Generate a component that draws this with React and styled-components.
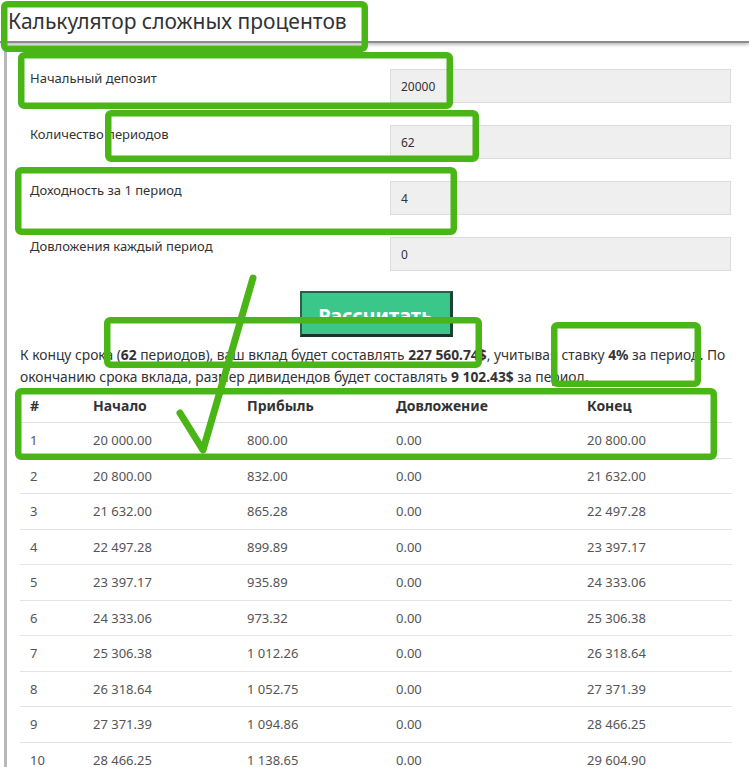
import React from "react"
import styled, { createGlobalStyle } from "styled-components"

const GlobalStyle = createGlobalStyle`
  body {
    margin: 0;
    background: #fff;
    font-family: "Noto Sans", "Open Sans", sans-serif;
    color: #333;
  }
`

const Page = styled.div`
  position: relative;
  width: 749px;
  height: 767px;
  overflow: hidden;
`

const Header = styled.header`
  height: 41px;
  padding: 0 8px;
  display: flex;
  align-items: center;
  border-bottom: 2px solid #8c8c8c;
  box-shadow: 0 2px 3px rgba(0, 0, 0, 0.25);
`

const Title = styled.h1`
  margin: 0;
  font-size: 21px;
  font-weight: 400;
  color: #333;
`

const Main = styled.main`
  margin-left: 4px;
  border-left: 3px solid #b8b8b8;
  padding: 26px 17px 0 13px;
  min-height: 800px;
`

const Form = styled.div`
  display: flex;
  flex-direction: column;
  gap: 22px;
`

const Row = styled.div`
  display: grid;
  grid-template-columns: 370px 1fr;
`

const Label = styled.label`
  padding-left: 10px;
  font-size: 13px;
  line-height: 18px;
  color: #333;
`

const Input = styled.div`
  height: 32px;
  border: 1px solid #dcdcdc;
  background: #efefef;
  padding-left: 10px;
  display: flex;
  align-items: center;
  font-size: 12px;
  color: #333;
  margin-right: 1px;
`

const ButtonRow = styled.div`
  display: flex;
  justify-content: center;
  margin-top: 20px;
`

const Button = styled.button`
  width: 153px;
  height: 46px;
  background: #3bc68a;
  border: 2px solid #2d5e48;
  border-bottom: 3px solid #16352a;
  border-right: 3px solid #1d4434;
  color: #fff;
  font-family: "Noto Sans", sans-serif;
  font-size: 20px;
  font-weight: 700;
  padding: 4px 0 0;
`

const Summary = styled.p`
  margin: 7px -20px 0 0;
  font-size: 13.8px;
  line-height: 22px;
  color: #333;

  b {
    font-weight: 700;
  }
`

const Table = styled.table`
  width: 100%;
  border-collapse: collapse;
  table-layout: fixed;
`

const Th = styled.th`
  height: 34px;
  padding: 0 10px;
  text-align: left;
  font-size: 14px;
  font-weight: 700;
  color: #333;
`

const Td = styled.td`
  height: 34.5px;
  padding: 0 10px;
  border-top: 1px solid #e2e2e2;
  font-size: 13px;
  color: #555;
`

const Overlay = styled.svg`
  position: absolute;
  top: 0;
  left: 0;
  pointer-events: none;
`

const fields = [
  ["Начальный депозит", "20000"],
  ["Количество периодов", "62"],
  ["Доходность за 1 период", "4"],
  ["Довложения каждый период", "0"],
]

const fmt = (n) =>
  n
    .toFixed(2)
    .replace(/\B(?=(\d{3})+(?!\d))/g, " ")

const rows = []
let start = 20000
for (let i = 1; i <= 10; i++) {
  const profit = Math.round(start * 0.04 * 100) / 100
  const end = Math.round((start + profit) * 100) / 100
  rows.push([i, fmt(start), fmt(profit), "0.00", fmt(end)])
  start = end
}

// green marker boxes drawn on the screenshot: outer left, top, right, bottom
const boxes = [
  [1, 1, 368, 52],
  [18, 52, 453, 109],
  [105, 110, 479, 162],
  [15, 167, 457, 235],
  [104, 317, 482, 368],
  [551, 322, 701, 387],
  [15, 388, 717, 460],
]
const SW = 6.5
const GREEN = "#4ab516"

const App = () => (
  <Page>
    <GlobalStyle />
    <Header>
      <Title>Калькулятор сложных процентов</Title>
    </Header>
    <Main>
      <Form>
        {fields.map(([label, value]) => (
          <Row key={label}>
            <Label>{label}</Label>
            <Input>{value}</Input>
          </Row>
        ))}
      </Form>
      <ButtonRow>
        <Button>Рассчитать</Button>
      </ButtonRow>
      <Summary>
        К концу срока (<b>62</b> периодов), ваш вклад будет составлять{" "}
        <b>227 560.74$</b>, учитывая ставку <b>4%</b> за период. По окончанию
        срока вклада, размер дивидендов будет составлять <b>9 102.43$</b> за
        период.
      </Summary>
      <Table>
        <colgroup>
          <col style={{ width: 63 }} />
          <col style={{ width: 154 }} />
          <col style={{ width: 149 }} />
          <col style={{ width: 191 }} />
          <col />
        </colgroup>
        <thead>
          <tr>
            <Th>#</Th>
            <Th>Начало</Th>
            <Th>Прибыль</Th>
            <Th>Довложение</Th>
            <Th>Конец</Th>
          </tr>
        </thead>
        <tbody>
          {rows.map((r) => (
            <tr key={r[0]}>
              {r.map((c, j) => (
                <Td key={j}>{c}</Td>
              ))}
            </tr>
          ))}
        </tbody>
      </Table>
    </Main>
    <Overlay width="749" height="767">
      {boxes.map(([x1, y1, x2, y2], i) => (
        <rect
          key={i}
          x={x1 + SW / 2}
          y={y1 + SW / 2}
          width={x2 - x1 - SW}
          height={y2 - y1 - SW}
          rx="3"
          fill="none"
          stroke={GREEN}
          strokeWidth={SW}
        />
      ))}
      <polyline
        points="180,413 203,450 253,278"
        fill="none"
        stroke={GREEN}
        strokeWidth="7"
        strokeLinecap="round"
        strokeLinejoin="round"
      />
    </Overlay>
  </Page>
)

export default App
